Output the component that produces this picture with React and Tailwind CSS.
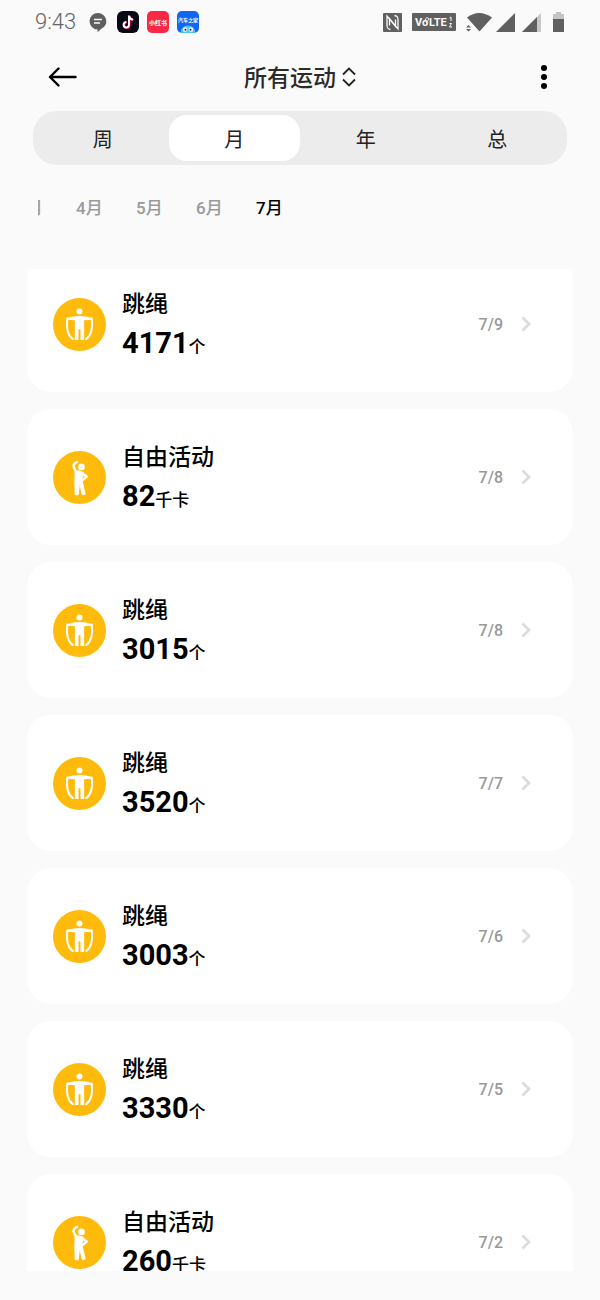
import React, { useLayoutEffect, useRef, useState } from "react";
import clsx from "clsx";

const TABS = ["周", "月", "年", "总"];

const MONTHS = ["3月", "4月", "5月", "6月", "7月"];

const RECORDS = [
  { id: 1, type: "rope", name: "跳绳", value: 4171, unit: "个", date: "7/9" },
  { id: 2, type: "free", name: "自由活动", value: 82, unit: "千卡", date: "7/8" },
  { id: 3, type: "rope", name: "跳绳", value: 3015, unit: "个", date: "7/8" },
  { id: 4, type: "rope", name: "跳绳", value: 3520, unit: "个", date: "7/7" },
  { id: 5, type: "rope", name: "跳绳", value: 3003, unit: "个", date: "7/6" },
  { id: 6, type: "rope", name: "跳绳", value: 3330, unit: "个", date: "7/5" },
  { id: 7, type: "free", name: "自由活动", value: 260, unit: "千卡", date: "7/2" },
];

const RopeIcon = () => (
  <svg viewBox="0 0 160 160" className="size-[53px] shrink-0" aria-hidden="true">
    <circle cx="80" cy="80" r="80" fill="#ffbb0c" />
    <circle cx="80" cy="41" r="9" fill="#fff" />
    <path
      d="M42 60 Q60 54 80 54 T118 60 L117 66 L94 67 V127 H83 V94 H77 V127 H66 V67 L43 66 Z"
      fill="#fff"
    />
    <path
      d="M43 62 C40 90 42 112 60 124 M117 62 C120 90 118 112 100 124"
      fill="none"
      stroke="#fff"
      strokeWidth="6"
      strokeLinecap="round"
    />
  </svg>
);

const FreeIcon = () => (
  <svg viewBox="0 0 160 160" className="size-[53px] shrink-0" aria-hidden="true">
    <circle cx="80" cy="80" r="80" fill="#ffbb0c" />
    <circle cx="86" cy="48" r="10" fill="#fff" />
    <path
      d="M73 33 C64 36 62 42 62 47 L70 63 M88 67 L102 77 L90 87"
      fill="none"
      stroke="#fff"
      strokeWidth="7"
      strokeLinecap="round"
      strokeLinejoin="round"
    />
    <path
      d="M67 60 Q80 58 92 65 L87 86 L97 130 L89 132 L80 98 L76 132 H67 L66 90 Z"
      fill="#fff"
      stroke="#fff"
      strokeWidth="3"
      strokeLinejoin="round"
    />
  </svg>
);

const StatusBar = () => (
  <div className="flex h-11 shrink-0 items-center justify-between pr-9 pl-[35px] text-[#666]">
    <div className="flex items-center gap-2">
      <span className="mr-[3px] text-[22px] leading-7 font-light">9:43</span>
      <svg viewBox="0 0 22 22" className="size-[22px]" aria-hidden="true">
        <path
          d="M11 2a8.5 8.3 0 0 1 3 16l-3.4 3.2v-2.6A8.3 8.3 0 0 1 11 2Z"
          fill="#606060"
        />
        <path d="M7 8.5h8M7 12h6" stroke="#fafafa" strokeWidth="1.6" />
      </svg>
      <svg viewBox="0 0 22 22" className="size-[22px]" aria-hidden="true">
        <rect width="22" height="22" rx="6" fill="#060a14" />
        <path
          d="M12 4.5v9.2a2.7 2.7 0 1 1-2.7-2.7M12 5c.4 2.2 1.8 3.4 4 3.6"
          fill="none"
          stroke="#f04"
          strokeWidth="2"
          transform="translate(.6 .5)"
        />
        <path
          d="M12 4.5v9.2a2.7 2.7 0 1 1-2.7-2.7M12 5c.4 2.2 1.8 3.4 4 3.6"
          fill="none"
          stroke="#fff"
          strokeWidth="2"
        />
      </svg>
      <svg viewBox="0 0 22 22" className="size-[22px]" aria-hidden="true">
        <rect width="22" height="22" rx="5" fill="#fb2744" />
        <text x="11" y="13.5" textAnchor="middle" fontSize="6" fontWeight="900" fill="#fff">
          小红书
        </text>
      </svg>
      <svg viewBox="0 0 22 22" className="size-[22px]" aria-hidden="true">
        <rect width="22" height="22" rx="5" fill="#1167f2" />
        <text x="11" y="11" textAnchor="middle" fontSize="5" fontWeight="700" fill="#fff">
          汽车之家
        </text>
        <path d="M3.500 22a7.500 7.500 0 0 1 15 0Z" fill="#4fc3f7" />
        <circle cx="8" cy="18.5" r="2.3" fill="#fff" />
        <circle cx="14" cy="18.5" r="2.3" fill="#fff" />
        <circle cx="8.5" cy="18.8" r="1" fill="#123" />
        <circle cx="13.5" cy="18.8" r="1" fill="#123" />
      </svg>
    </div>

    <div className="flex items-center">
      <svg viewBox="0 0 19 19" className="size-[19px]" aria-hidden="true">
        <rect width="19" height="19" rx="1" fill="#606060" />
        <path
          d="M7.500 16.500C4.500 16 4 15 4 12V3L12.500 13.500V6.500M11.500 2.500C14.500 3 15 4 15 7v9L6.500 5.500v7"
          fill="none"
          stroke="#fafafa"
          strokeWidth="1.3"
        />
      </svg>
      <svg viewBox="0 0 44 18" className="ml-[10px] h-[18px] w-11" aria-hidden="true">
        <rect width="44" height="18" rx="1" fill="#606060" />
        <text x="3" y="13" fontSize="11" fontWeight="700" fill="#fafafa">
          Vo
        </text>
        <path d="M13.5 7c0-3 3-3 3-1s-2 2-2 4" stroke="#fafafa" fill="none" />
        <text x="17" y="13" fontSize="11" fontWeight="700" fill="#fafafa">
          LTE
        </text>
        <path d="M39 4v4M37.500 5l1.500-1M37.500 10.500h2l-2 3.500h2.500" stroke="#fafafa" fill="none" />
      </svg>
      <svg viewBox="0 0 26 20" className="ml-[10px] h-5 w-[26px]" aria-hidden="true">
        <path d="M1 5.5Q13-3.500 26 5.500L13.500 19.500Z" fill="#606060" />
        <path d="M0 15.500 2.500 13 5 15.500ZM0 17 2.500 19.500 5 17Z" fill="#606060" />
      </svg>
      <svg viewBox="0 0 19 19" className="ml-1 size-[19px]" aria-hidden="true">
        <path d="M19 0v19H0Z" fill="#606060" />
      </svg>
      <svg viewBox="0 0 19 19" className="ml-[7px] size-[19px]" aria-hidden="true">
        <path d="M19 0v19H0Z" fill="#c8c8c8" />
        <path d="M15 4v15H0Z" fill="#606060" />
      </svg>
      <svg viewBox="0 0 11 20" className="ml-3 h-5 w-[11px]" aria-hidden="true">
        <path d="M0 2h3V0h5v2h3v5H0Z" fill="#c4c4c4" />
        <path d="M0 7h11v13H0Z" fill="#606060" />
      </svg>
    </div>
  </div>
);

const RecordCard = ({ record }) => (
  <li>
    <a
      href={`#record-${record.id}`}
      className="flex h-[136px] items-center gap-4 rounded-3xl bg-white pr-[42px] pl-[26px]"
    >
      {record.type === "rope" ? <RopeIcon /> : <FreeIcon />}
      <div className="min-w-0 flex-1 pt-1 leading-[39px] text-black">
        <h2 className="text-[23px] font-medium">{record.name}</h2>
        <p className="flex items-baseline font-bold">
          <span className="text-[29px]">{record.value}</span>
          <span className="text-[17px] font-medium">{record.unit}</span>
        </p>
      </div>
      <div className="flex items-center gap-[18px]">
        <span className="pt-0.5 text-base font-medium text-[#999]">{record.date}</span>
        <svg viewBox="0 0 10 16" className="h-4 w-[10px]" aria-hidden="true">
          <path d="M1.500 1.500 8 8l-6.500 6.500" fill="none" stroke="#dcdcdc" strokeWidth="2.8" />
        </svg>
      </div>
    </a>
  </li>
);

export default function App() {
  const [tab, setTab] = useState("月");
  const [month, setMonth] = useState("7月");
  const monthsRef = useRef(null);
  const listRef = useRef(null);

  // open on the latest month, list slightly scrolled
  useLayoutEffect(() => {
    monthsRef.current.scrollLeft = 22;
    listRef.current.scrollTop = 13;
  }, []);

  return (
    <div className="flex h-screen w-full flex-col bg-[#fafafa] pb-[29px] font-[Roboto,'Noto_Sans_CJK_SC',sans-serif]">
      <StatusBar />

      {/* Header */}
      <header className="mb-px flex h-[66px] shrink-0 items-center justify-between px-12">
        <button type="button" aria-label="返回" className="w-8">
          <svg viewBox="0 0 30 20" className="h-5 w-[30px]" aria-hidden="true">
            <path
              d="M27.500 10H2M10.500 1.500 2 10l8.500 8.500"
              fill="none"
              stroke="#000"
              strokeWidth="2.4"
              strokeLinecap="round"
              strokeLinejoin="round"
            />
          </svg>
        </button>
        <button type="button" className="flex items-center gap-1.5">
          <h1 className="pt-1 text-[23px] leading-8 font-medium text-[#2b2b2b]">所有运动</h1>
          <svg viewBox="0 0 14 20" className="h-5 w-[14px]" aria-hidden="true">
            <path
              d="M1 7.500 7 1.500l6 6M1 12.500l6 6 6-6"
              fill="none"
              stroke="#222"
              strokeWidth="1.8"
            />
          </svg>
        </button>
        <button type="button" aria-label="更多" className="flex w-8 justify-center pl-4">
          <svg viewBox="0 0 6 24" className="h-6 w-[6px]" aria-hidden="true">
            <circle cx="3" cy="3" r="3" />
            <circle cx="3" cy="12" r="3" />
            <circle cx="3" cy="21" r="3" />
          </svg>
        </button>
      </header>

      {/* Period tabs */}
      <nav className="mx-[33px] flex h-[54px] shrink-0 rounded-3xl bg-[#ececec] p-1">
        {TABS.map((item) => (
          <button
            key={item}
            type="button"
            onClick={() => setTab(item)}
            className={clsx(
              "flex-1 rounded-[18px] pt-1 text-xl text-[#222]",
              tab === item && "bg-white"
            )}
          >
            {item}
          </button>
        ))}
      </nav>

      {/* Months */}
      <div
        ref={monthsRef}
        className="mx-[38px] mt-6 flex h-10 shrink-0 overflow-x-auto [scrollbar-width:none]"
      >
        {MONTHS.map((item) => (
          <button
            key={item}
            type="button"
            onClick={() => setMonth(item)}
            className={clsx(
              "w-[60px] shrink-0 text-left text-[17px] font-medium",
              month === item ? "text-black" : "text-[#999]"
            )}
          >
            {item}
          </button>
        ))}
        <div className="w-full shrink-0" />
      </div>

      {/* Records */}
      <ul
        ref={listRef}
        className="mx-[27px] mt-10 flex min-h-0 flex-1 flex-col gap-[17px] overflow-y-auto [scrollbar-width:none]"
      >
        {RECORDS.map((record) => (
          <RecordCard key={record.id} record={record} />
        ))}
      </ul>
    </div>
  );
}
